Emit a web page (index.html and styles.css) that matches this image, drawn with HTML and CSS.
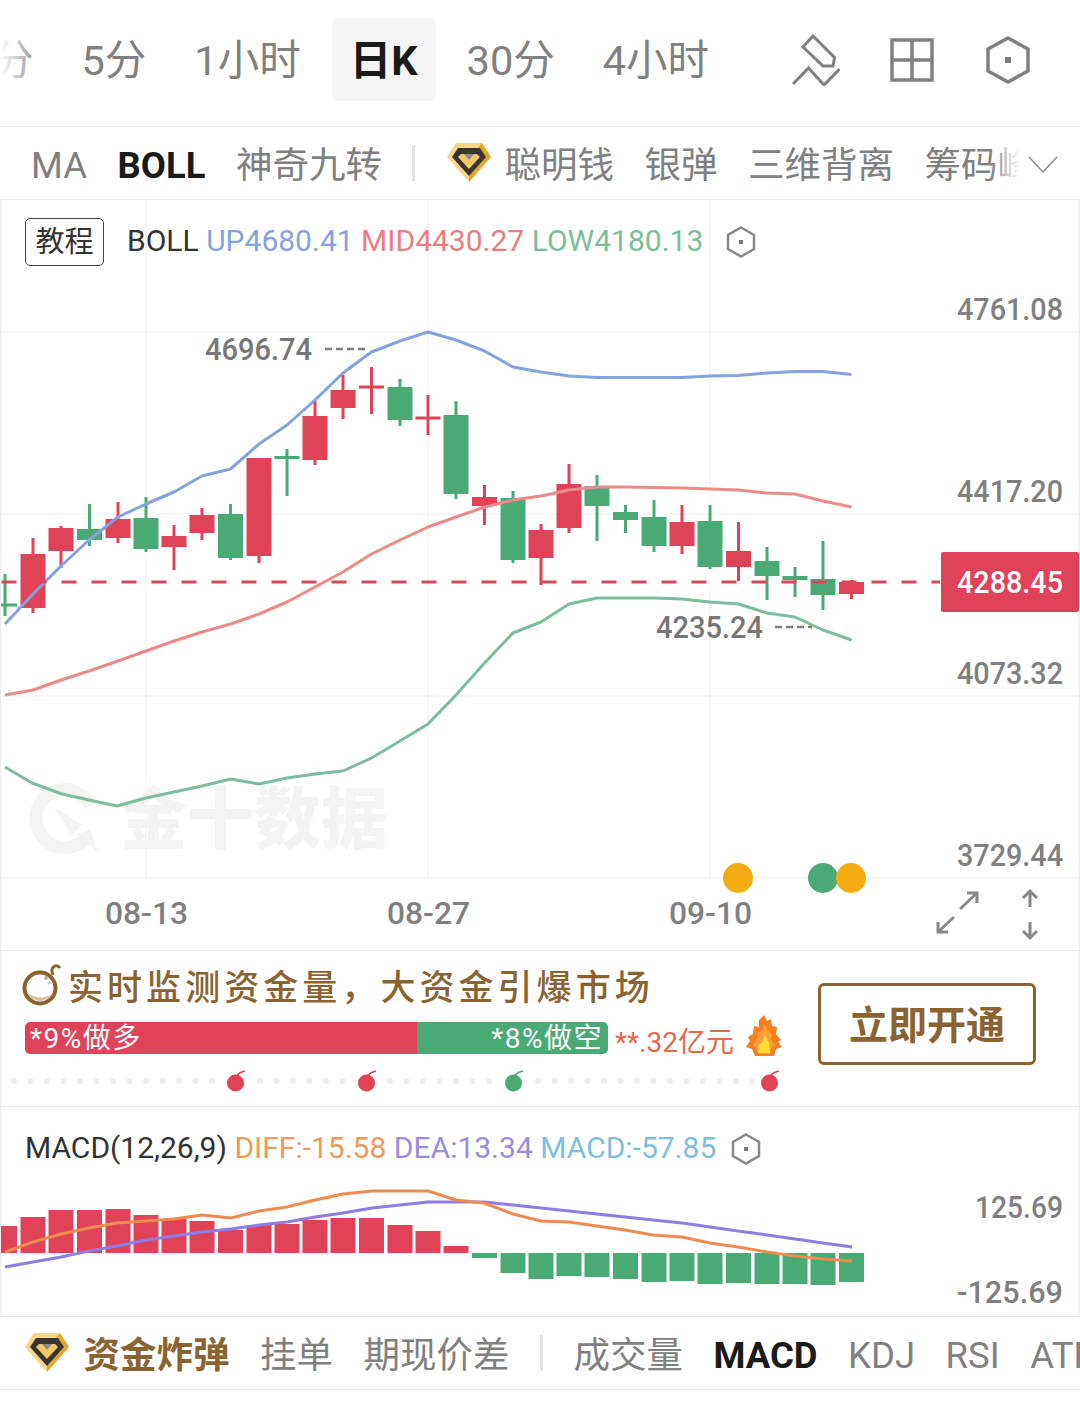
FILE: index.html
```html
<!DOCTYPE html>
<html lang="zh-CN">
<head>
    <meta charset="UTF-8">
    <title>日K BOLL</title>
    <link rel="stylesheet" href="styles.css">
</head>
<body>
    <svg class="defs" width="0" height="0">
        <symbol id="gem" viewBox="0 0 44 40">
            <path d="M9 0H35L44 14L22 39L0 14Z" fill="#f6d688"/>
            <path d="M35 0L44 14L22 39V33L38 14L31 5Z" fill="#e5a62c"/>
            <path d="M11 5H33L39 14L22 33L5 14Z" fill="#3a352f"/>
            <path d="M14 11H30L33 14L22 26L11 14Z" fill="#f3c667"/>
            <path d="M17 11H27L22 17Z" fill="#8a8a8a"/>
        </symbol>
        <symbol id="hex" viewBox="0 0 30 32">
            <path d="M15 1.5L28 9V23L15 30.5L2 23V9Z" fill="none" stroke="#888" stroke-width="2.5"/>
            <rect x="13" y="14" width="4" height="4" fill="#777"/>
        </symbol>
        <symbol id="bomb" viewBox="0 0 20 22">
            <circle cx="8.5" cy="13" r="8.5"/>
            <path d="M6 5h6v4h-6z"/>
            <path d="M10 5Q13 2 18 1" fill="none" stroke="currentColor" stroke-width="1.5"/>
        </symbol>
    </svg>

    <header class="tabs">
        <div class="tab-list">
            <span class="tab">分</span>
            <span class="tab">5分</span>
            <span class="tab">1小时</span>
            <span class="tab tab-active">日K</span>
            <span class="tab">30分</span>
            <span class="tab">4小时</span>
            <span class="tab">周K</span>
        </div>
        <div class="tab-tools">
            <svg class="tool tool-pen" width="48" height="52" viewBox="0 0 48 52">
                <path d="M21 2L42.500 23.500L41 32H31L11 13Z"/>
                <path d="M1 50L16.500 34L32 51L47.500 35"/>
            </svg>
            <svg class="tool" width="44" height="44" viewBox="0 0 44 44">
                <path d="M2 2H42V42H2ZM22 2V42M2 22H42"/>
            </svg>
            <svg class="tool" width="44" height="48" viewBox="0 0 44 48">
                <path d="M22 2L42 13V35L22 46L2 35V13Z"/>
                <rect class="tool-dot" x="19" y="21" width="6" height="6"/>
            </svg>
        </div>
    </header>

    <nav class="indicators">
        <span class="ind">MA</span>
        <span class="ind ind-active">BOLL</span>
        <span class="ind">神奇九转</span>
        <i class="sep"></i>
        <svg class="gem gem-top"><use href="#gem"/></svg>
        <span class="ind ind-gem">聪明钱</span>
        <span class="ind">银弹</span>
        <span class="ind">三维背离</span>
        <span class="ind">筹码峰</span>
        <div class="ind-more">
            <svg width="30" height="18" viewBox="0 0 30 18"><path d="M1 1L15 16L29 1" fill="none" stroke="#8a8a8a" stroke-width="1.500"/></svg>
        </div>
    </nav>

    <section class="chart">
        <svg class="plot" width="1080" height="750" viewBox="0 200 1080 750">
            <path class="grid" d="M146 200V878M428 200V878M710 200V878M0 332H1080M0 514H1080M0 696H1080M0 878H1080"/>

            <!-- watermark -->
            <g class="mark">
                <path d="M88 836A29 29 0 1 1 91 806" fill="none" stroke-width="13"/>
                <path d="M55 808L82 825L72 834Z"/>
                <path d="M77 835L90 830L97 851Z"/>
                <text x="120" y="843">金十数据</text>
            </g>

            <!-- candles -->
            <path class="wick-up" d="M33 538V613M61 526V568M118 502V543M174 525V570M202 508V540M259 458V563M315 400V465M343 375V419M371.500 367V414M428 395V435M484.500 485V525M541 524V585M569 464V533M682 505V554M738.500 522V581M851.500 580V599"/>
            <path class="body-up" d="M20.500 554h25v54h-25zM48.500 528h25v23h-25zM105.500 519h25v19h-25zM161.500 536h25v11h-25zM189.500 515h25v18h-25zM246.500 458h25v98h-25zM302.500 416h25v44h-25zM330.500 390h25v18h-25zM359 385.500h25v3h-25zM415.500 416.500h25v3h-25zM472 497h25v9h-25zM528.500 530h25v28h-25zM556.500 484h25v44h-25zM669.500 522h25v24h-25zM726 551h25v16h-25zM839 582h25v12h-25z"/>
            <path class="wick-down" d="M5 574V616M89.500 504V546M146 497V552M230.500 504V560M287 449V496M400 379V426M456 401V499M513 491V563M597 475V541M625.500 505V533M654 500V552M710 505V569M767 547V600M795 567V597M823 541V610"/>
            <path class="body-down" d="M1 603.500h16v3h-16zM77 529h25v11h-25zM133.500 518h25v31h-25zM218 514h25v44h-25zM274.500 456h25v3h-25zM387.500 387h25v33h-25zM443.500 415h25v79h-25zM500.500 498h25v62h-25zM584.500 486h25v20h-25zM613 512h25v8h-25zM641.500 517h25v29h-25zM697.500 521h25v46h-25zM754.500 561h25v15h-25zM782.500 576h25v4h-25zM810.500 579h25v16h-25z"/>

            <!-- bands -->
            <polyline class="band-up" points="5,624 33,594 61,566 89,540 118,517 146,504 174,492 202,476 230.500,469 259,444 287,425 315,400 343,373 371.500,352 400,341 428,332 456,340 484.500,351 513,367 541,372 569,376 597,377.500 625.500,377.500 654,377.500 682,377.500 710,376 738.500,375.500 767,373 795,371.500 823,371.500 851.500,374.500"/>
            <polyline class="band-mid" points="5,695 33,690 61,680 89,671 118,661 146,651 174,641 202,632 230.500,624 259,614 287,602 315,587 343,572 371.500,554 400,540 428,527 456,517 484.500,507 513,500 541,496 569,490 597,487 625.500,487 654,487.500 682,488 710,489 738.500,490 767,493 795,494 823,501 851.500,507"/>
            <polyline class="band-low" points="5,767 32,783 62,794 89,800 117,806 146,798 174,792 202,786 231,779 259,784 287,778 315,774 343,771 371.500,758 400,741 428,724 456,695 484.500,663 513,633 541,622 569,604 597,598 625.500,598 654,598 682,599 710,602 738.500,604 767,613 795,617 823,630 851.500,640"/>

            <!-- last price -->
            <path class="last-line" d="M1.500 582H940"/>
            <rect class="last-tag" x="941" y="552" width="138" height="60" rx="2"/>

            <!-- high / low -->
            <text class="num num-mid" x="205" y="360" textLength="107" lengthAdjust="spacingAndGlyphs">4696.74</text>
            <path class="tick" d="M325 349H367"/>
            <text class="num num-mid" x="656" y="638" textLength="107" lengthAdjust="spacingAndGlyphs">4235.24</text>
            <path class="tick" d="M775 627H812"/>

            <!-- price axis -->
            <text class="num" x="957" y="320" textLength="106" lengthAdjust="spacingAndGlyphs">4761.08</text>
            <text class="num" x="957" y="502" textLength="106" lengthAdjust="spacingAndGlyphs">4417.20</text>
            <text class="num num-last" x="957" y="593" textLength="106" lengthAdjust="spacingAndGlyphs">4288.45</text>
            <text class="num" x="957" y="684" textLength="106" lengthAdjust="spacingAndGlyphs">4073.32</text>
            <text class="num" x="957" y="866" textLength="106" lengthAdjust="spacingAndGlyphs">3729.44</text>

            <!-- date axis -->
            <text class="num" x="105" y="924" textLength="83" lengthAdjust="spacingAndGlyphs">08-13</text>
            <text class="num" x="387" y="924" textLength="83" lengthAdjust="spacingAndGlyphs">08-27</text>
            <text class="num" x="669" y="924" textLength="83" lengthAdjust="spacingAndGlyphs">09-10</text>

            <circle class="ev-gold" cx="738" cy="878" r="15"/>
            <circle class="ev-green" cx="823" cy="878" r="15"/>
            <circle class="ev-gold" cx="851" cy="878" r="15"/>

            <path class="arrows" d="M960 909L977 893M967 893H977V903M954 917L938 932M938 922V932H948M1030 907V891M1023 898L1030 891L1037 898M1030 922V938M1023 931L1030 938L1037 931"/>
        </svg>

        <div class="legend legend-boll">
            <span class="tutorial">教程</span>
            <span class="legend-name">BOLL</span>
            <span class="c-up">UP4680.41</span>
            <span class="c-mid">MID4430.27</span>
            <span class="c-low">LOW4180.13</span>
            <svg class="hex"><use href="#hex"/></svg>
        </div>
    </section>

    <section class="promo">
        <div class="promo-main">
            <div class="promo-title">
                <svg width="42" height="44" viewBox="0 0 42 44">
                    <circle cx="18" cy="26" r="15.500" fill="#fff" stroke="#8b6331" stroke-width="4"/>
                    <path d="M5 30A14 14 0 0 0 30 32A20 20 0 0 1 5 30Z" fill="#d9c2a3"/>
                    <circle cx="24" cy="16" r="2" fill="#b9b0a6"/>
                    <circle cx="27" cy="21" r="1.500" fill="#c9c0b6"/>
                    <path d="M31 13Q28 6 33 4Q36 3 38 6" fill="none" stroke="#8b6331" stroke-width="3"/>
                </svg>
                <span>实时监测资金量，大资金引爆市场</span>
            </div>
            <div class="flow">
                <div class="flow-bar">
                    <span class="flow-long">*9%做多</span>
                    <span class="flow-short">*8%做空</span>
                </div>
                <span class="flow-amount">**.32亿元</span>
                <svg class="flame" width="36" height="42" viewBox="0 0 36 42">
                    <path d="M18 0L21 6L25 4L26 11L31 12L30 19L35 25L32 27L36 32L30 34L28 41H9L6 34L0 32L4 26L2 22L7 19L8 11L13 12L13 5Z" fill="#f77f1f"/>
                    <path d="M18 9L22 16L26 19L25 25L29 30L25 33L24 39H12L10 33L7 30L11 24L12 17L16 16Z" fill="#fba03a"/>
                    <path d="M19 20L23 28L24 38H12L13 29L16 28Z" fill="#fde02f"/>
                </svg>
            </div>
            <svg class="signals" width="790" height="24" viewBox="0 1069 790 24">
                <path d="M14 1080H222M260 1080H350M390 1080H498M538 1080H756" fill="none" stroke="#eee" stroke-width="6" stroke-linecap="round" stroke-dasharray="0 16.500"/>
                <use href="#bomb" x="227" y="1069" width="20" height="22" class="bomb-red"/>
                <use href="#bomb" x="358" y="1069" width="20" height="22" class="bomb-red"/>
                <use href="#bomb" x="505" y="1069" width="20" height="22" class="bomb-green"/>
                <use href="#bomb" x="761" y="1069" width="20" height="22" class="bomb-red"/>
            </svg>
        </div>
        <button class="promo-btn">立即开通</button>
    </section>

    <section class="macd">
        <svg class="plot" width="1080" height="209" viewBox="0 1107 1080 209">
            <path class="grid-side" d="M0 1107V1316"/>
            <path class="body-up" d="M1 1226h16v27h-16zM20.500 1217h25v36h-25zM48.500 1210h25v43h-25zM77 1210h25v43h-25zM105.500 1209h25v44h-25zM133.500 1215h25v38h-25zM161.500 1219h25v34h-25zM189.500 1221h25v32h-25zM218 1230h25v23h-25zM246.500 1225h25v28h-25zM274.500 1224h25v29h-25zM302.500 1220h25v33h-25zM330.500 1218h25v35h-25zM359 1218h25v35h-25zM387.500 1225h25v28h-25zM415.500 1231h25v22h-25zM443.500 1246h25v7h-25z"/>
            <path class="body-down" d="M472 1253h25v5h-25zM500.500 1253h25v20h-25zM528.500 1253h25v26h-25zM556.500 1253h25v23h-25zM584.500 1253h25v24h-25zM613 1253h25v26h-25zM641.500 1253h25v29h-25zM669.500 1253h25v28h-25zM697.500 1253h25v31h-25zM726 1253h25v30h-25zM754.500 1253h25v31h-25zM782.500 1253h25v31h-25zM810.500 1253h25v32h-25zM839 1253h25v29h-25z"/>
            <polyline class="line-dea" points="5,1267 33,1262 61,1257 89,1251 117,1246 146,1240 174,1236 202,1232 231,1229 259,1225 287,1222 315,1217 343,1213 372,1208 400,1205 428,1202 456,1202 484,1202 513,1205 541,1208 569,1211 597,1214 625,1217 653,1220 682,1223 710,1227 738,1231 767,1235 795,1239 823,1243 852,1247"/>
            <polyline class="line-diff" points="5,1252 33,1242 61,1234 89,1228 117,1223 146,1221 174,1219 202,1215 231,1218 259,1211 287,1207 315,1200 343,1194 372,1191 400,1191 428,1191 456,1200 484,1203 513,1214 541,1221 569,1222 597,1226 625,1230 653,1235 682,1237 710,1243 738,1247 767,1252 795,1256 823,1259 852,1261"/>
            <text class="num" x="975" y="1218" textLength="88" lengthAdjust="spacingAndGlyphs">125.69</text>
            <text class="num" x="957" y="1303" textLength="106" lengthAdjust="spacingAndGlyphs">-125.69</text>
        </svg>
        <div class="legend legend-macd">
            <span class="legend-name">MACD(12,26,9)</span>
            <span class="c-diff">DIFF:-15.58</span>
            <span class="c-dea">DEA:13.34</span>
            <span class="c-macd">MACD:-57.85</span>
            <svg class="hex"><use href="#hex"/></svg>
        </div>
    </section>

    <nav class="indicators indicators-bottom">
        <svg class="gem"><use href="#gem"/></svg>
        <span class="ind ind-brand">资金炸弹</span>
        <span class="ind">挂单</span>
        <span class="ind">期现价差</span>
        <i class="sep"></i>
        <span class="ind">成交量</span>
        <span class="ind ind-active">MACD</span>
        <span class="ind">KDJ</span>
        <span class="ind">RSI</span>
        <span class="ind">ATR</span>
    </nav>
</body>
</html>
```

FILE: styles.css
```css
body {
    margin: 0;
    background: #fff;
    width: 1080px;
    overflow-x: hidden;
    font-family: Roboto, "Noto Sans CJK SC", sans-serif;
}

.defs {
    position: absolute;
}

/* top period tabs */
.tabs {
    display: flex;
    justify-content: space-between;
    height: 126px;
    border-bottom: 1px solid #ebebeb;
}

.tab-list {
    position: relative;
    display: flex;
    align-items: flex-start;
    width: 762px;
    margin-top: 18px;
    overflow: hidden;
}

.tab-list::before,
.tab-list::after {
    content: "";
    position: absolute;
    top: 0;
    bottom: 0;
    z-index: 1;
}

.tab-list::before {
    left: 0;
    width: 34px;
    background: linear-gradient(to right, rgba(255, 255, 255, 1), rgba(255, 255, 255, 0.2));
}

.tab-list::after {
    right: 0;
    width: 30px;
    background: linear-gradient(to right, rgba(255, 255, 255, 0.9), #fff);
}

.tab {
    flex: none;
    height: 83px;
    padding: 0 24px;
    font-size: 41.5px;
    line-height: 85px;
    color: #808080;
    border-radius: 6px;
}

.tab:first-child {
    margin-left: -32px;
}

.tab-active {
    margin: 0 7px 0 7px;
    padding: 0 18px;
    background: #f4f4f4;
    color: #1a1a1a;
    font-weight: 700;
}

.tab-tools {
    display: flex;
    align-items: center;
    gap: 52px;
    padding: 0 50px 6px 0;
}

.tool {
    fill: none;
    stroke: #808080;
    stroke-width: 3.5;
}

.tool-pen {
    margin-right: -2px;
    stroke-width: 3;
}

.tool-dot {
    fill: #808080;
    stroke: none;
}

/* indicator rows */
.indicators {
    position: relative;
    display: flex;
    align-items: center;
    gap: 30.5px;
    height: 72px;
    padding-left: 31px;
    border-bottom: 1px solid #ebebeb;
    overflow: hidden;
    white-space: nowrap;
}

.ind {
    flex: none;
    margin-top: 5px;
    font-size: 36.5px;
    line-height: 72px;
    color: #808080;
}

.ind-active {
    color: #1a1a1a;
    font-weight: 700;
}

.ind-gem {
    margin-left: -17px;
}

.ind-brand {
    margin-left: -16px;
    color: #8b6331;
    font-weight: 700;
}

.sep {
    flex: none;
    width: 3px;
    height: 36px;
    background: #e4e4e4;
}

.gem {
    flex: none;
    width: 44px;
    height: 40px;
}

.gem-top {
    margin-left: 1px;
}

.ind-more {
    position: absolute;
    top: 0;
    right: 0;
    display: flex;
    align-items: center;
    justify-content: flex-end;
    width: 90px;
    height: 72px;
    padding: 3px 22px 0 0;
    box-sizing: border-box;
    background: linear-gradient(to right, rgba(255, 255, 255, 0), #fff 33%);
}

.indicators-bottom {
    padding-left: 25px;
}

/* chart panels */
.chart {
    position: relative;
    height: 750px;
    border-bottom: 1px solid #ebebeb;
    box-shadow: inset 1px 0 #eee, inset -1px 0 #eee;
}

.plot {
    display: block;
}

.grid {
    fill: none;
    stroke: #efefef;
    stroke-width: 1;
}

.grid-side {
    fill: none;
    stroke: #eee;
    stroke-width: 2;
}

.mark {
    fill: #f3f3f3;
    stroke: #f3f3f3;
}

.mark text {
    font-family: "Noto Sans CJK SC", sans-serif;
    font-size: 67px;
    font-weight: 900;
    stroke: none;
}

.wick-up {
    fill: none;
    stroke: #e04258;
    stroke-width: 3;
}

.wick-down {
    fill: none;
    stroke: #4aaa76;
    stroke-width: 3;
}

.body-up {
    fill: #e04258;
}

.body-down {
    fill: #4aaa76;
}

.band-up,
.band-mid,
.band-low,
.line-dea,
.line-diff {
    fill: none;
    stroke-width: 3;
    stroke-linejoin: round;
}

.band-up {
    stroke: #86a2de;
}

.band-mid {
    stroke: #eb8a88;
}

.band-low {
    stroke: #7dbd9c;
}

.line-dea {
    stroke: #8f7be3;
}

.line-diff {
    stroke: #ee8c50;
}

.last-line {
    fill: none;
    stroke: #d9475b;
    stroke-width: 3;
    stroke-dasharray: 15 15;
}

.last-tag {
    fill: #e04258;
}

.tick {
    fill: none;
    stroke: #808080;
    stroke-width: 2.5;
    stroke-dasharray: 7 4;
}

.num {
    font-size: 32px;
    font-weight: 500;
    fill: #808080;
}

.num-mid {
    fill: #777;
}

.num-last {
    fill: #fff;
}

.ev-gold {
    fill: #f4ac12;
}

.ev-green {
    fill: #4aaa76;
}

.arrows {
    fill: none;
    stroke: #888;
    stroke-width: 3;
}

.legend {
    position: absolute;
    left: 25px;
    display: flex;
    align-items: center;
    gap: 7.5px;
    font-size: 30px;
    color: #333;
    white-space: nowrap;
}

.legend-boll {
    top: 18px;
}

.legend-boll span + span {
    margin-bottom: 3px;
}

.legend-macd {
    top: 23px;
}

.tutorial {
    width: 77px;
    height: 46px;
    margin-right: 15.5px;
    border: 1px solid #444;
    border-radius: 5px;
    font-size: 29px;
    text-align: center;
    line-height: 46px;
}

.hex {
    width: 30px;
    height: 32px;
    margin-left: 15px;
}

.legend-macd .hex {
    margin: 3px 0 0 7px;
}

.c-up {
    color: #86a2de;
}

.c-mid {
    color: #e87e83;
}

.c-low {
    color: #7dbd9c;
}

.c-diff {
    color: #ee9a5e;
}

.c-dea {
    color: #9a8ce0;
}

.c-macd {
    color: #7cc0dd;
}

/* promo strip */
.promo {
    display: flex;
    justify-content: space-between;
    height: 155px;
    padding: 0 44px 0 0;
    border-bottom: 1px solid #ebebeb;
    box-shadow: inset 1px 0 #eee, inset -1px 0 #eee;
}

.promo-main {
    display: flex;
    flex-direction: column;
}

.promo-title {
    display: flex;
    align-items: center;
    gap: 4px;
    height: 66px;
    margin-bottom: 5px;
    padding-left: 22px;
    font-size: 35px;
    font-weight: 500;
    letter-spacing: 4.05px;
    color: #8b6331;
    white-space: nowrap;
}

.flow {
    display: flex;
    align-items: center;
    height: 32px;
    padding-left: 25px;
}

.flow-bar {
    display: flex;
    justify-content: space-between;
    width: 583px;
    height: 32px;
    font-size: 28px;
    line-height: 34px;
    color: #fff;
    border-radius: 5px;
    overflow: hidden;
    background: linear-gradient(to right, #e04258 392px, #4aaa76 392px);
}

.flow-long {
    padding-left: 5px;
    letter-spacing: 1.5px;
}

.flow-short {
    padding-right: 5px;
    letter-spacing: 1.5px;
}

.flow-amount {
    margin: 4px 0 0 7px;
    font-size: 28px;
    color: #e8694a;
}

.flame {
    margin: 0 0 4px 12px;
}

.signals {
    display: block;
    margin-top: 16px;
}

.bomb-red {
    fill: #e04258;
    color: #e04258;
}

.bomb-green {
    fill: #4aaa76;
    color: #4aaa76;
}

.promo-btn {
    flex: none;
    width: 218px;
    height: 82px;
    margin-top: 32px;
    padding: 0 0 5px;
    background: #fff;
    border: 3px solid #8b6331;
    border-radius: 6px;
    font-family: inherit;
    font-size: 39px;
    font-weight: 700;
    color: #8b6331;
}

.macd {
    position: relative;
    height: 209px;
    border-bottom: 1px solid #ebebeb;
    box-shadow: inset 1px 0 #eee, inset -1px 0 #eee;
}
```
